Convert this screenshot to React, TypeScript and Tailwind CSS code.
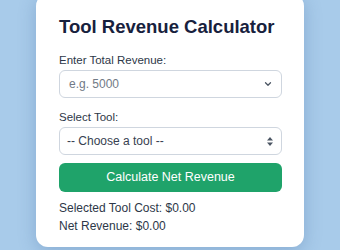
import { ChevronDown } from 'lucide-react';

export default function App() {
  return (
    <div className="min-h-[250px] w-[340px] bg-[#a8cbea] overflow-hidden font-['Liberation_Sans',Arial,sans-serif]">
      {/* Card */}
      <div className="-mt-[6px] mx-auto w-[268px] bg-white rounded-xl shadow-[0_4px_18px_rgba(40,80,140,0.25)] pl-[23px] pr-[22px] pt-[22px] pb-[12px]">
        <h1 className="text-[18.5px] leading-[22px] font-bold text-[#17213d]">Tool Revenue Calculator</h1>

        <label className="block mt-[14px] text-[11.5px] leading-[16px] text-[#2d3748]">Enter Total Revenue:</label>
        <div className="mt-[2px] h-[28px] rounded-md border border-[#cfd6df] flex items-center pl-[9px] pr-[8px]">
          <span className="flex-1 text-[12px] text-[#717a86]">e.g. 5000</span>
          <ChevronDown size={10} strokeWidth={3} className="text-[#4b5563]" />
        </div>

        <label className="block mt-[11px] text-[11.5px] leading-[16px] text-[#2d3748]">Select Tool:</label>
        <div className="mt-[2px] h-[28px] rounded-md border border-[#cfd6df] flex items-center pl-[7px] pr-[8px]">
          <span className="flex-1 text-[12px] text-[#374151]">-- Choose a tool --</span>
          <svg width="6" height="9" viewBox="0 0 6 9" className="text-[#4b5563]">
            <path d="M3 0 L6 3.5 L0 3.5 Z M0 5.5 L6 5.5 L3 9 Z" fill="currentColor" />
          </svg>
        </div>

        <button className="mt-[8px] w-full h-[29px] rounded-md bg-[#1fa36a] text-white text-[12.5px] font-medium">
          Calculate Net Revenue
        </button>

        <div className="mt-[7px] text-[12px] leading-[18px] text-[#2d3748]">
          <p>Selected Tool Cost: $0.00</p>
          <p>Net Revenue: $0.00</p>
        </div>
      </div>
    </div>
  );
}
